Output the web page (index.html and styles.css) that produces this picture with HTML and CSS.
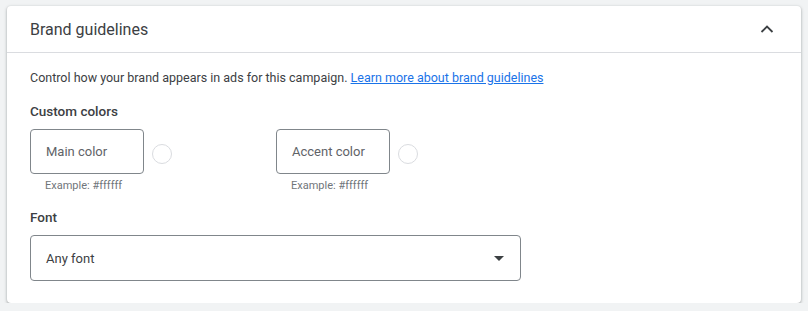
FILE: index.html
```html
<!DOCTYPE html>
<html lang="en">
<head>
    <meta charset="UTF-8">
    <meta name="viewport" content="width=device-width, initial-scale=1.0">
    <title>Brand guidelines</title>
    <link rel="stylesheet" href="styles.css">
</head>
<body>
    <div class="card">
        <div class="card-header">
            <h2>Brand guidelines</h2>
            <svg class="chevron" width="24" height="24" viewBox="0 0 24 24">
                <path d="M6.5 15L12 9.5 17.5 15" fill="none" stroke="#3c4043" stroke-width="1.8"/>
            </svg>
        </div>
        <div class="card-body">
            <p class="intro">Control how your brand appears in ads for this campaign. <a href="#">Learn more about brand guidelines</a></p>

            <h3>Custom colors</h3>
            <div class="color-row">
                <div class="color-field">
                    <div class="color-input">
                        <div class="text-box">Main color</div>
                        <span class="swatch"></span>
                    </div>
                    <div class="hint">Example: #ffffff</div>
                </div>
                <div class="color-field">
                    <div class="color-input">
                        <div class="text-box">Accent color</div>
                        <span class="swatch"></span>
                    </div>
                    <div class="hint">Example: #ffffff</div>
                </div>
            </div>

            <h3 class="font-label">Font</h3>
            <div class="select-box">
                <span>Any font</span>
                <svg width="10" height="5" viewBox="0 0 10 5">
                    <path d="M0 0l5 5 5-5z" fill="#3c4043"/>
                </svg>
            </div>
        </div>
    </div>
</body>
</html>
```

FILE: styles.css
```css
body {
    margin: 0;
    padding: 6px 7px 0 7px;
    background-color: #f1f3f4;
    font-family: Roboto, Arial, sans-serif;
    color: #3c4043;
}

.card {
    background-color: white;
    border-radius: 4px;
    box-shadow: 0 1px 2px rgba(60, 64, 67, 0.3), 0 1px 3px 1px rgba(60, 64, 67, 0.15);
    height: 297px;
    box-sizing: border-box;
}

.card-header {
    display: flex;
    align-items: center;
    justify-content: space-between;
    height: 46px;
    padding: 0 22px 0 23px;
    border-bottom: 1px solid #dadce0;
}

.card-header h2 {
    margin: 0;
    font-size: 16px;
    font-weight: 400;
    color: #3c4043;
}

.card-body {
    padding: 17px 23px 0 23px;
}

.intro {
    margin: 0;
    font-size: 12.5px;
    line-height: 16px;
}

.intro a {
    color: #1a73e8;
}

h3 {
    margin: 16px 0 9px 0;
    font-size: 13.5px;
    font-weight: 500;
    color: #3c4043;
    line-height: 18px;
}

.color-row {
    display: flex;
    gap: 104px;
}

.color-input {
    display: flex;
    align-items: center;
    gap: 8px;
}

.text-box {
    width: 114px;
    height: 45px;
    box-sizing: border-box;
    border: 1px solid #80868b;
    border-radius: 4px;
    padding: 0 15px;
    display: flex;
    align-items: center;
    font-size: 13px;
    color: #5f6368;
}

.swatch {
    width: 18px;
    height: 18px;
    border: 1px solid #dadce0;
    border-radius: 50%;
    margin-top: 4px;
}

.hint {
    margin-top: 5px;
    padding-left: 15px;
    font-size: 11px;
    color: #70757a;
}

.font-label {
    margin: 16px 0 9px 0;
}

.select-box {
    width: 491px;
    height: 46px;
    box-sizing: border-box;
    border: 1px solid #80868b;
    border-radius: 4px;
    padding: 0 16px 0 15px;
    display: flex;
    align-items: center;
    justify-content: space-between;
    font-size: 13px;
    color: #3c4043;
}
```
